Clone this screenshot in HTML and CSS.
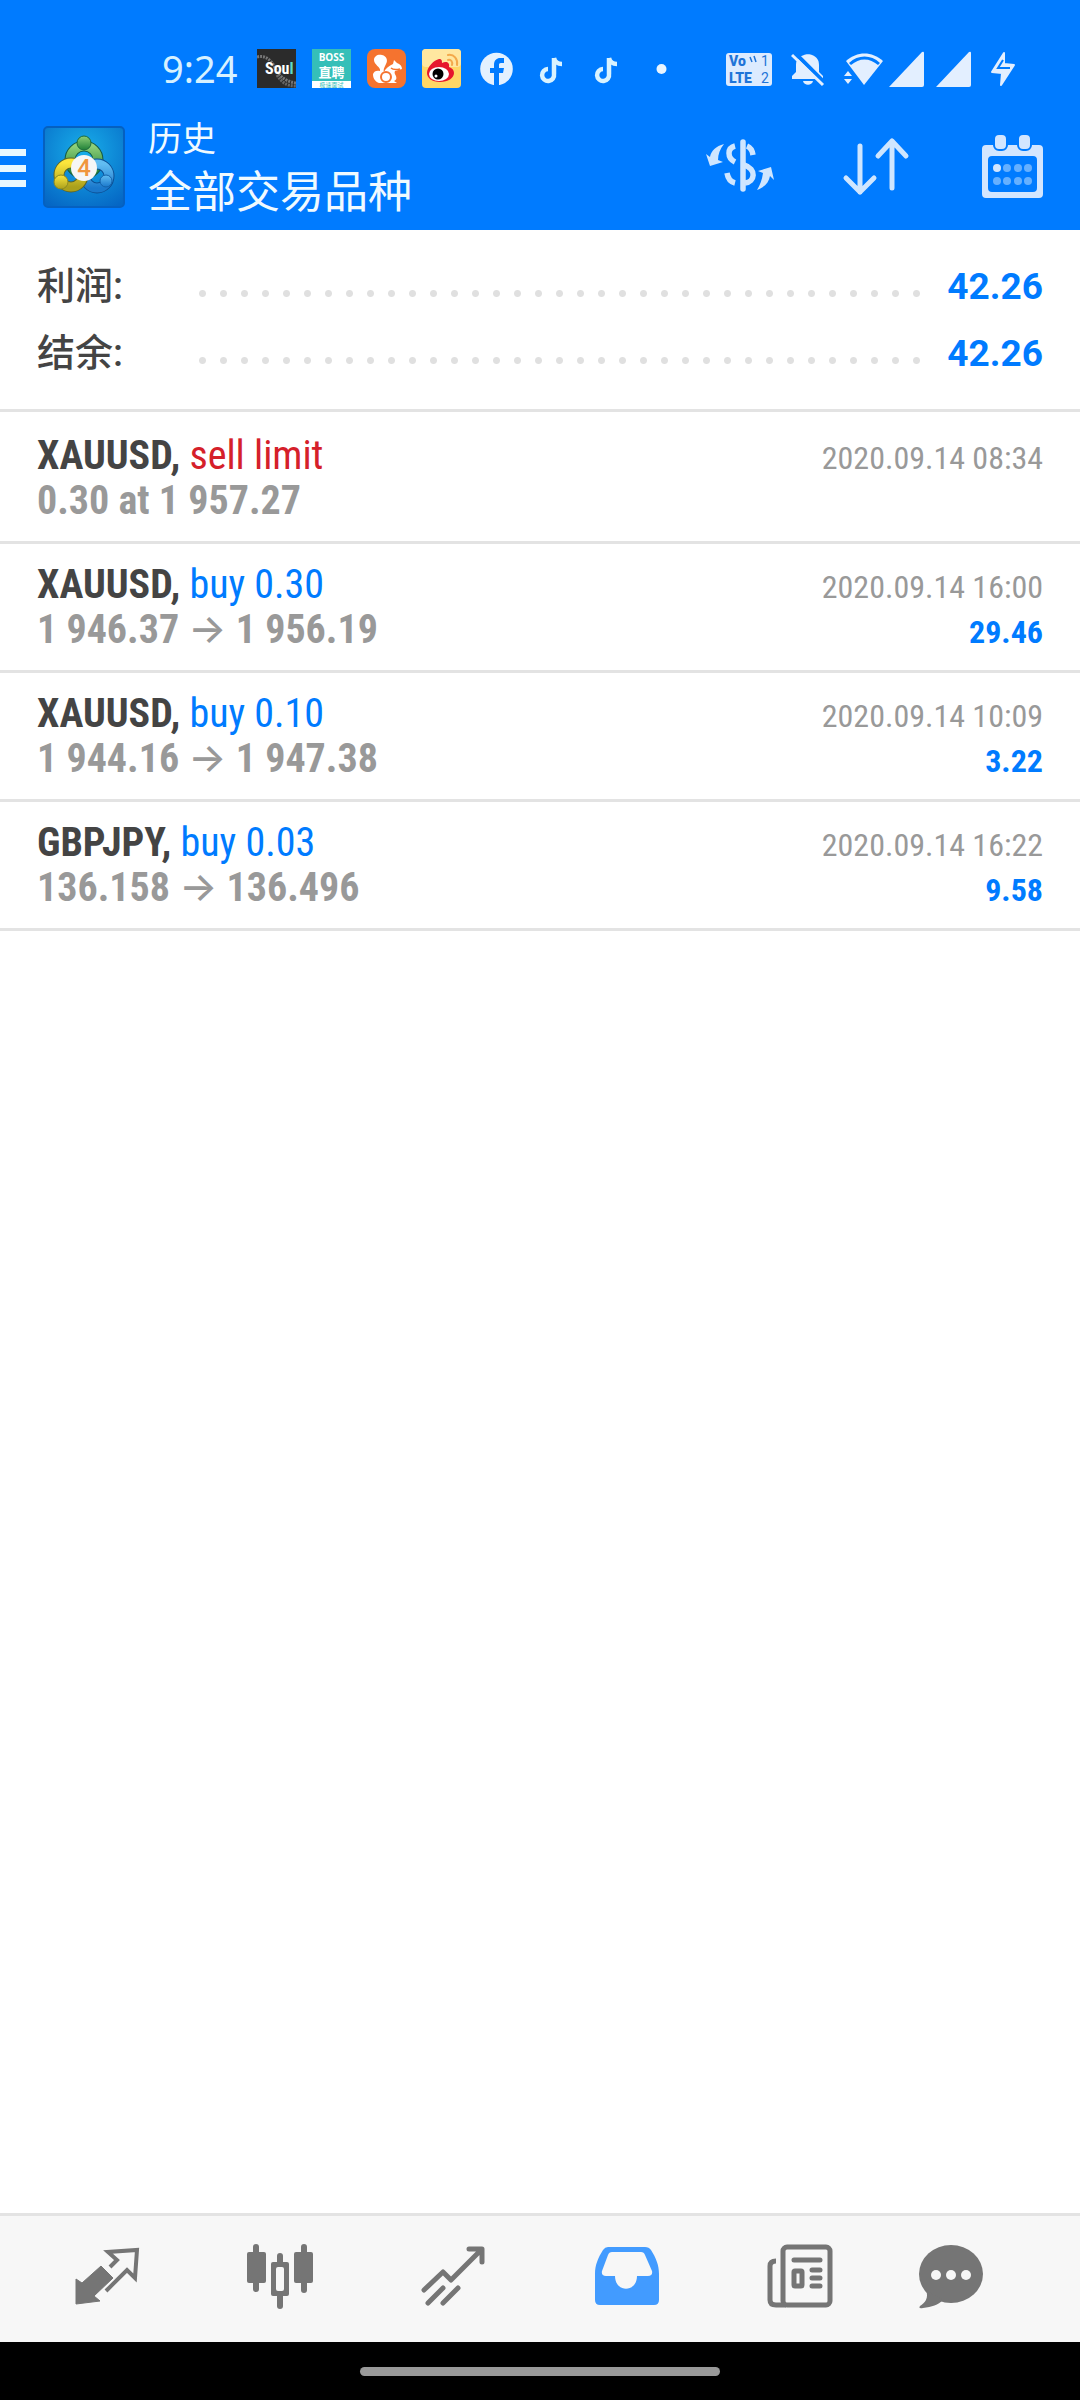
FILE: index.html
```html
<!DOCTYPE html>
<html lang="zh-CN">
<head>
  <meta charset="UTF-8" />
  <meta name="viewport" content="width=device-width, initial-scale=1.0"/>
  <title>历史</title>
  <link rel="stylesheet" href="styles.css">
</head>
<body>
<header class="header">
  <div class="status-bar">
    <span class="clock">9:24</span>
    <div class="status-apps">
      <!-- Soul -->
      <svg viewBox="0 0 39 39" class="app-icon">
        <rect width="39" height="39" fill="#2b2b2b"/>
        <path d="M0 8c8-2 13 2 17 9s8 15 22 17" fill="none" stroke="#777" stroke-width="3" stroke-dasharray="2 1"/>
        <path d="M20 26c5 8 10 11 19 11" fill="none" stroke="#666" stroke-width="3" stroke-dasharray="2 1"/>
        <text x="8" y="25" class="soul-text">Sou<tspan fill="#5fd9c4">l</tspan></text>
      </svg>
      <!-- BOSS -->
      <svg viewBox="0 0 39 39" class="app-icon">
        <rect width="39" height="39" fill="#35bfb8"/>
        <rect y="32" width="39" height="7" fill="#fff"/>
        <text x="19.500" y="12" text-anchor="middle" class="boss-text">BOSS</text>
        <text x="19.500" y="28" text-anchor="middle" class="boss-name">直聘</text>
        <text x="19.500" y="38" text-anchor="middle" class="boss-note">极速面试</text>
      </svg>
      <!-- UC -->
      <svg viewBox="0 0 39 39" class="app-icon">
        <rect width="39" height="39" rx="8" fill="#f5732f"/>
        <path d="M12 34c-5-2-6-6-6-9 1-3 4-4 7-3 1-4-6-6-6-11 0-4 4-6 8-5 5 1 6 6 4 9-2 4-3 6-2 8 2-4 5-6 9-8l1-4 3 3c3 1 5 3 5 6l-7 2c-1 2 0 3 1 5 1 3 0 4-2 5l3 2z" fill="#fff"/>
        <circle cx="19" cy="28" r="5" fill="none" stroke="#f5732f" stroke-width="2"/>
        <path d="M24 19c2 2 5 2 9 1" fill="none" stroke="#f5732f" stroke-width="1.500"/>
      </svg>
      <!-- Weibo -->
      <svg viewBox="0 0 39 39" class="app-icon">
        <rect width="39" height="39" rx="4" fill="#ffd766"/>
        <rect width="39" height="18" rx="4" fill="#ffe7a0"/>
        <path d="M5 24c0-6 7-13 12-14 3 0 3 2 3 4 4-2 8-1 7 4 3 1 5 3 5 6 0 5-6 9-14 9S5 29 5 24z" fill="#e6162d"/>
        <ellipse cx="17" cy="25" rx="10" ry="7" fill="#fff"/>
        <circle cx="16" cy="25" r="5.500" fill="#000"/>
        <circle cx="14" cy="27" r="1.500" fill="#fff"/>
        <path d="M26 6c6-1 10 4 9 10M26 11c3-1 5 2 4 5" fill="none" stroke="#f3a94b" stroke-width="2" stroke-linecap="round"/>
      </svg>
      <!-- Facebook -->
      <svg viewBox="0 0 39 39" class="app-icon">
        <circle cx="19.500" cy="20" r="16.300" fill="#e3f1ff"/>
        <path d="M17 37V24h-4v-5h4v-3c0-5 3-7 6-7h4v5h-3c-2 0-2 1-2 2v3h5l-1 5h-4v13z" fill="#007bff"/>
      </svg>
      <!-- TikTok -->
      <svg viewBox="0 0 39 39" class="app-icon">
        <path d="M22 9v16a6 6 0 1 1-6-5M22 9c1 4 3 6 8 6" fill="none" stroke="#d9f3ff" stroke-width="4.500"/>
      </svg>
      <svg viewBox="0 0 39 39" class="app-icon">
        <path d="M22 9v16a6 6 0 1 1-6-5M22 9c1 4 3 6 8 6" fill="none" stroke="#d9f3ff" stroke-width="4.500"/>
      </svg>
      <svg viewBox="0 0 39 39" class="app-icon">
        <circle cx="19.500" cy="20" r="5" fill="#e9f5ff"/>
      </svg>
    </div>
    <div class="status-system">
      <svg viewBox="0 0 46 36" width="46" height="36">
        <rect y="2" width="46" height="33" rx="3" fill="#dcebff"/>
        <text x="3" y="15" class="volte-text">Vo</text>
        <text x="3" y="32" class="volte-text">LTE</text>
        <text x="35" y="15" class="volte-num">1</text>
        <text x="35" y="32" class="volte-num">2</text>
        <path d="M24 6l2 5M28 5l2 6" stroke="#1f74d8" stroke-width="1.500"/>
      </svg>
      <svg viewBox="0 0 34 36" width="34" height="36">
        <path d="M1 28v-3l4-4v-7c0-7 5-9 8-10 1-1 7-1 8 0 5 2 7 5 7 10v7l4 4v3zM12 30h10c-1 5-9 5-10 0z" fill="#e3efff"/>
        <path d="M3 1l31 31" stroke="#007bff" stroke-width="4"/>
        <path d="M1 4l31 30" stroke="#e3efff" stroke-width="3"/>
      </svg>
      <svg viewBox="0 0 40 36" width="40" height="36">
        <path d="M2 10C13 0 28 0 39 10L20 34z" fill="#e3efff"/>
        <path d="M6 13c9-8 20-8 29 0" fill="none" stroke="#007bff" stroke-width="3"/>
        <path d="M0 25l4-5 4 5zM0 28l4 5 4-5z" fill="#e3efff"/>
      </svg>
      <svg viewBox="0 0 36 36" width="36" height="36" class="signal">
        <path d="M1 36L34 1q2-1 2 1v32q0 2-2 2z" fill="#e3efff"/>
      </svg>
      <svg viewBox="0 0 36 36" width="36" height="36" class="signal">
        <path d="M1 36L34 1q2-1 2 1v32q0 2-2 2z" fill="#e3efff"/>
      </svg>
      <svg viewBox="0 0 26 36" width="26" height="36">
        <path d="M14 2L2 21l10 1-1 12 13-20-10-1z" fill="#e3efff" stroke="#e3efff" stroke-width="2" stroke-linejoin="round"/>
        <path d="M13 9l-5 8h12" fill="none" stroke="#007bff" stroke-width="2"/>
      </svg>
    </div>
  </div>

  <div class="app-bar">
    <button class="icon-button" aria-label="菜单">
      <svg viewBox="0 0 26 40" width="26" height="40" fill="#e8f8ff">
        <rect y="2" width="26" height="7"/>
        <rect y="18" width="26" height="7"/>
        <rect y="33" width="26" height="7"/>
      </svg>
    </button>
    <svg class="logo" viewBox="0 0 82 82">
      <defs>
        <radialGradient id="tile" cx="50%" cy="30%" r="80%">
          <stop offset="0" stop-color="#18aeea"/>
          <stop offset="1" stop-color="#0566c4"/>
        </radialGradient>
        <linearGradient id="green" x1="0" y1="0" x2="0" y2="1">
          <stop offset="0" stop-color="#8fd078"/>
          <stop offset="1" stop-color="#1f8038"/>
        </linearGradient>
        <linearGradient id="yellow" x1="0" y1="0" x2="0" y2="1">
          <stop offset="0" stop-color="#fbe63c"/>
          <stop offset="1" stop-color="#aaa01c"/>
        </linearGradient>
        <linearGradient id="blue" x1="0" y1="0" x2="0" y2="1">
          <stop offset="0" stop-color="#62bdf2"/>
          <stop offset="1" stop-color="#1a78cc"/>
        </linearGradient>
      </defs>
      <rect x="1" y="1" width="80" height="80" rx="4" fill="url(#tile)" stroke="#0560c0" stroke-width="2"/>
      <circle cx="41" cy="34" r="14" fill="none" stroke="#155a44" stroke-width="11"/>
      <circle cx="41" cy="34" r="14" fill="none" stroke="url(#green)" stroke-width="9"/>
      <circle cx="54" cy="50" r="12" fill="none" stroke="#0c4e93" stroke-width="11"/>
      <circle cx="54" cy="50" r="12" fill="none" stroke="url(#blue)" stroke-width="9"/>
      <circle cx="28" cy="49" r="12" fill="none" stroke="#5c6428" stroke-width="11"/>
      <circle cx="28" cy="49" r="12" fill="none" stroke="url(#yellow)" stroke-width="9"/>
      <circle cx="41" cy="17" r="7" fill="url(#green)" stroke="#1c6a3c"/>
      <circle cx="18" cy="56" r="7" fill="url(#yellow)" stroke="#8c8a20"/>
      <circle cx="63" cy="55" r="6" fill="url(#blue)" stroke="#1462aa"/>
      <circle cx="41" cy="42" r="13" fill="#f6f6f6"/>
      <text x="41" y="50" text-anchor="middle" class="logo-text">4</text>
    </svg>
    <div class="titles">
      <div class="subtitle">历史</div>
      <h1 class="title">全部交易品种</h1>
    </div>
    <div class="actions">
      <button class="icon-button" aria-label="交易品种">
        <svg viewBox="0 0 68 64" width="68" height="64">
          <g fill="none" stroke="#cfe6ff" stroke-width="5.500">
            <path d="M37 7v47" stroke-linecap="round"/>
            <path d="M29 11c-8 2-8 12 0 16M21 38c1 6 4 9 8 10M41 11q5 2 6 9M38 30c13 4 11 17 1 18"/>
          </g>
          <path d="M18 9C10 11 5 16 4 22l-4-3 4 12 13-4-5-2c0-6 2-11 6-16zM51 55c8-3 12-8 13-14l4 4-3-13-13 4 5 2c-1 7-3 12-6 17z" fill="#cfe6ff"/>
        </svg>
      </button>
      <button class="icon-button" aria-label="排序">
        <svg viewBox="0 0 68 64" width="68" height="64" fill="none" stroke="#cfe6ff" stroke-width="5" stroke-linecap="round" stroke-linejoin="round">
          <path d="M18 11v46M4 43l14 14 14-14"/>
          <path d="M50 53V6M36 21L50 6l14 15"/>
        </svg>
      </button>
      <button class="icon-button" aria-label="日期">
        <svg viewBox="0 0 68 64" width="68" height="64">
          <path d="M8 10h53q4 0 4 4v45q0 4-4 4H8q-4 0-4-4V14q0-4 4-4zM14 21q-4 0-4 4v28q0 4 4 4h41q4 0 4-4V25q0-4-4-4z" fill="#d3e6ff" fill-rule="evenodd"/>
          <rect x="16" y="-1" width="13" height="16" rx="5" fill="#d3e6ff" stroke="#007bff" stroke-width="2"/>
          <rect x="40" y="-1" width="13" height="16" rx="5" fill="#d3e6ff" stroke="#007bff" stroke-width="2"/>
          <circle cx="19" cy="33" r="4" fill="#d3e6ff"/>
          <g fill="#66b0ff">
            <circle cx="29" cy="33" r="4"/><circle cx="40" cy="33" r="4"/><circle cx="50" cy="33" r="4"/>
            <circle cx="19" cy="46" r="4"/><circle cx="29" cy="46" r="4"/><circle cx="40" cy="46" r="4"/><circle cx="50" cy="46" r="4"/>
          </g>
        </svg>
      </button>
    </div>
  </div>
</header>

<main class="content">
  <section class="summary">
    <div class="summary-row">
      <span class="summary-label">利润:</span>
      <span class="dots"></span>
      <span class="summary-value">42.26</span>
    </div>
    <div class="summary-row">
      <span class="summary-label">结余:</span>
      <span class="dots"></span>
      <span class="summary-value">42.26</span>
    </div>
  </section>

  <ul class="trades">
    <li class="trade">
      <div class="trade-line">
        <div class="symbol">XAUUSD, <span class="sell">sell limit</span></div>
        <div class="date">2020.09.14 08:34</div>
      </div>
      <div class="trade-line">
        <div class="price">0.30 at 1 957.27</div>
      </div>
    </li>
    <li class="trade">
      <div class="trade-line">
        <div class="symbol">XAUUSD, <span class="buy">buy 0.30</span></div>
        <div class="date">2020.09.14 16:00</div>
      </div>
      <div class="trade-line">
        <div class="price">1 946.37 <span class="arrow">→</span> 1 956.19</div>
        <div class="profit">29.46</div>
      </div>
    </li>
    <li class="trade">
      <div class="trade-line">
        <div class="symbol">XAUUSD, <span class="buy">buy 0.10</span></div>
        <div class="date">2020.09.14 10:09</div>
      </div>
      <div class="trade-line">
        <div class="price">1 944.16 <span class="arrow">→</span> 1 947.38</div>
        <div class="profit">3.22</div>
      </div>
    </li>
    <li class="trade">
      <div class="trade-line">
        <div class="symbol">GBPJPY, <span class="buy">buy 0.03</span></div>
        <div class="date">2020.09.14 16:22</div>
      </div>
      <div class="trade-line">
        <div class="price">136.158 <span class="arrow">→</span> 136.496</div>
        <div class="profit">9.58</div>
      </div>
    </li>
  </ul>
</main>

<nav class="tab-bar">
  <button class="tab" aria-label="行情">
    <svg viewBox="0 0 66 66" width="66" height="66">
      <path d="M2 35l6 4 19-17 12 12-19 18 6 5-24 3z" fill="#757575" stroke="#757575" stroke-linejoin="round"/>
      <path d="M36 23l7-7-9-8 29-2-2 28-8-8-21 21" fill="none" stroke="#757575" stroke-width="4"/>
    </svg>
  </button>
  <button class="tab" aria-label="图表">
    <svg viewBox="0 0 66 66" width="66" height="66" fill="#757575">
      <rect y="8" width="19" height="31" rx="2"/><rect x="6" y="0" width="6" height="48" rx="3"/>
      <rect x="47" y="8" width="19" height="31" rx="2"/><rect x="54" y="0" width="6" height="49" rx="3"/>
      <rect x="30" y="9" width="6" height="56" rx="3"/><rect x="24" y="18" width="18" height="34" rx="2"/>
      <rect x="29" y="23" width="8" height="24" rx="2" fill="#f7f7f7"/>
    </svg>
  </button>
  <button class="tab" aria-label="交易">
    <svg viewBox="0 0 66 66" width="66" height="66" fill="none" stroke="#757575" stroke-width="5" stroke-linejoin="round" stroke-linecap="round">
      <path d="M4 46l19-18 8 8L61 6M49 5h13v13M8 59l15-15M23 59l15-15"/>
    </svg>
  </button>
  <button class="tab" aria-label="历史">
    <svg viewBox="0 0 66 66" width="66" height="66">
      <path d="M14 3h37q4 0 6 3c5 8 8 15 8 24v26q0 5-5 5H6q-5 0-5-5V30C1 21 4 14 9 6q2-3 5-3zM18 8q-3 0-4 3L8 27q-1 5 4 5h9c0 17 22 17 22 0h11q5 0 4-5l-7-16q-1-3-4-3z" fill="#429bff" fill-rule="evenodd"/>
    </svg>
  </button>
  <button class="tab" aria-label="新闻">
    <svg viewBox="0 0 66 66" width="66" height="66" fill="none" stroke="#757575" stroke-width="5" stroke-linecap="round">
      <rect x="16" y="3" width="47" height="58" rx="4"/>
      <path d="M9 17q-6 0-6 5v34q0 5 6 5h10" stroke-linecap="butt"/>
      <path d="M27 16h26M45 26h8M45 34h8M45 42h8"/>
      <rect x="27" y="27" width="8" height="15" rx="1"/>
    </svg>
  </button>
  <button class="tab" aria-label="消息">
    <svg viewBox="0 0 66 66" width="66" height="66">
      <ellipse cx="33" cy="30" rx="32" ry="29" fill="#757575"/>
      <path d="M8 46c3 8-1 13-6 16q-2 3 3 2c9-1 15-3 20-8z" fill="#757575"/>
      <g fill="#f7f7f7"><circle cx="18" cy="31" r="5"/><circle cx="33" cy="31" r="5"/><circle cx="48" cy="31" r="5"/></g>
    </svg>
  </button>
</nav>
<div class="gesture-bar"><div class="gesture-handle"></div></div>
</body>
</html>
```

FILE: styles.css
```css
* {
  box-sizing: border-box;
}

body {
  font-family: Roboto, "Noto Sans CJK SC", sans-serif;
  margin: 0;
  background: #ffffff;
  display: flex;
  flex-direction: column;
  min-height: 100vh;
}

svg {
  display: block;
  flex-shrink: 0;
}

button {
  background: none;
  border: none;
  padding: 0;
  cursor: pointer;
}

/* header */
.header {
  background: #007bff;
  color: #f0faff;
}

.status-bar {
  display: flex;
  align-items: center;
  padding: 49px 64px 0 162px;
}

.clock {
  width: 95px;
  font-family: "Noto Sans", sans-serif;
  font-size: 38px;
  line-height: 39px;
  color: #d6f1ff;
}

.status-apps {
  display: flex;
  flex: 1;
  gap: 16px;
}

.app-icon {
  width: 39px;
  height: 39px;
}

.status-system {
  display: flex;
  align-items: center;
  gap: 19px;
}

.signal {
  margin-left: -15px;
}

.signal + .signal {
  margin-left: -8px;
}

.soul-text {
  font: bold 16px "Roboto Condensed", Roboto, sans-serif;
  fill: #fff;
}

.boss-text {
  font: bold 10px "Open Sans", sans-serif;
  fill: #fff;
}

.boss-name {
  font: bold 13px "Noto Sans CJK SC", sans-serif;
  fill: #fff;
}

.boss-note {
  font: 6px "Noto Sans CJK SC", sans-serif;
  fill: #35bfb8;
}

.volte-text {
  font: 900 14px Roboto, sans-serif;
  fill: #1f74d8;
}

.volte-num {
  font: 14px Roboto, sans-serif;
  fill: #1f74d8;
}

.app-bar {
  display: flex;
  align-items: center;
  padding: 16px 34px 0 0;
}

.logo {
  width: 82px;
  height: 82px;
  margin: 0 23px 0 17px;
}

.logo-text {
  font: 500 24px Roboto, sans-serif;
  fill: #f0953c;
}

.titles {
  flex: 1;
  padding: 11px 0 7px;
}

.subtitle {
  font-size: 34px;
  line-height: 48px;
}

.title {
  margin: 0;
  font-size: 44px;
  font-weight: 400;
  line-height: 60px;
}

.actions {
  display: flex;
  gap: 68px;
}

/* history */
.content {
  flex: 1;
}

.summary {
  padding: 23px 37px 22px;
  border-bottom: 3px solid #e3e3e3;
}

.summary-row {
  display: flex;
  align-items: center;
  font-size: 38px;
  line-height: 67px;
}

.summary-label {
  width: 155px;
  color: #444;
  font-weight: 500;
}

.dots {
  flex: 1;
  height: 7px;
  margin: 14px 22px 0 0;
  background: radial-gradient(circle, #e0e0e0 3px, transparent 4px) 0 0 / 21px 7px;
}

.summary-value {
  color: #007bff;
  font-size: 37px;
  font-weight: 700;
}

.trades {
  list-style: none;
  margin: 0;
  padding: 0;
}

.trade {
  padding: 18px 37px;
  border-bottom: 3px solid #e3e3e3;
  font-family: "Roboto Condensed", "Liberation Sans Narrow", Roboto, sans-serif;
  font-size: 40px;
  line-height: 45px;
}

.trade:first-child {
  padding-top: 21px;
}

.trade-line {
  display: flex;
  justify-content: space-between;
  align-items: baseline;
}

.symbol {
  color: #444;
  font-weight: 700;
}

.sell,
.buy {
  font-weight: 400;
}

.sell {
  color: #d5202a;
}

.buy {
  color: #007bff;
}

.price {
  color: #999;
  font-weight: 700;
}

.arrow {
  font-family: Inter, sans-serif;
  font-weight: 500;
  line-height: 0;
}

.date {
  color: #999;
  font-size: 32px;
  line-height: 36px;
}

.profit {
  color: #007bff;
  font-size: 32px;
  font-weight: 700;
  line-height: 36px;
}

/* bottom tabs */
.tab-bar {
  display: flex;
  padding: 28px 20px 32px;
  background: #f7f7f7;
  border-top: 3px solid #e3e3e3;
}

.tab {
  flex: 1;
  display: flex;
  justify-content: center;
}

.tab:last-child {
  justify-content: flex-start;
}

.tab:last-child svg {
  margin-left: 31px;
}

.gesture-bar {
  background: #000;
  padding: 25px 0 24px;
}

.gesture-handle {
  width: 33.3333%;
  height: 9px;
  margin: 0 auto;
  border-radius: 5px;
  background: #999;
}
```
